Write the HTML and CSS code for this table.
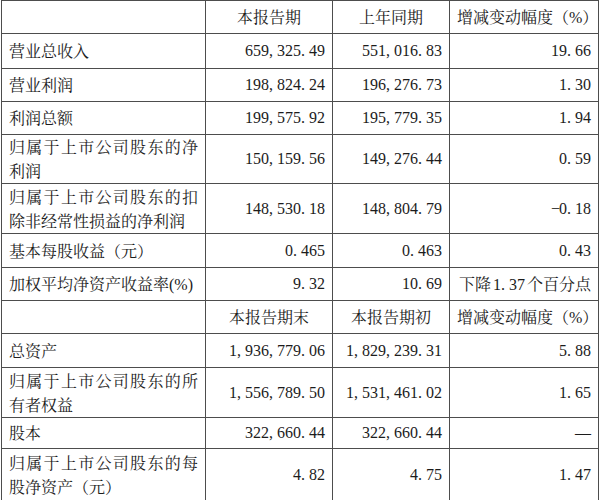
FILE: index.html
```html
<!DOCTYPE html>
<html lang="zh-CN">
<head>
<meta charset="utf-8">
<link rel="stylesheet" href="styles.css">
</head>
<body>
<table class="fin">
  <colgroup>
    <col class="c1"><col class="c2"><col class="c3"><col class="c4">
  </colgroup>
  <tbody>
    <tr class="h33">
      <td class="lbl"></td>
      <td class="hd">本报告期</td>
      <td class="hd">上年同期</td>
      <td class="hd">增减变动幅度（<span class="n">%</span>）</td>
    </tr>
    <tr class="h35">
      <td class="lbl">营业总收入</td>
      <td class="num">659<span class="s">,</span>325<span class="s">.</span>49</td>
      <td class="num">551<span class="s">,</span>016<span class="s">.</span>83</td>
      <td class="num">19<span class="s">.</span>66</td>
    </tr>
    <tr class="h33">
      <td class="lbl">营业利润</td>
      <td class="num">198<span class="s">,</span>824<span class="s">.</span>24</td>
      <td class="num">196<span class="s">,</span>276<span class="s">.</span>73</td>
      <td class="num">1<span class="s">.</span>30</td>
    </tr>
    <tr class="h33">
      <td class="lbl">利润总额</td>
      <td class="num">199<span class="s">,</span>575<span class="s">.</span>92</td>
      <td class="num">195<span class="s">,</span>779<span class="s">.</span>35</td>
      <td class="num">1<span class="s">.</span>94</td>
    </tr>
    <tr class="h49">
      <td class="lbl">归属于上市公司股东的净利润</td>
      <td class="num">150<span class="s">,</span>159<span class="s">.</span>56</td>
      <td class="num">149<span class="s">,</span>276<span class="s">.</span>44</td>
      <td class="num">0<span class="s">.</span>59</td>
    </tr>
    <tr class="h50">
      <td class="lbl">归属于上市公司股东的扣除非经常性损益的净利润</td>
      <td class="num">148<span class="s">,</span>530<span class="s">.</span>18</td>
      <td class="num">148<span class="s">,</span>804<span class="s">.</span>79</td>
      <td class="num"><span class="s">−</span>0<span class="s">.</span>18</td>
    </tr>
    <tr class="h34">
      <td class="lbl">基本每股收益（元）</td>
      <td class="num">0<span class="s">.</span>465</td>
      <td class="num">0<span class="s">.</span>463</td>
      <td class="num">0<span class="s">.</span>43</td>
    </tr>
    <tr class="h33">
      <td class="lbl">加权平均净资产收益率<span class="n">(%)</span></td>
      <td class="num">9<span class="s">.</span>32</td>
      <td class="num">10<span class="s">.</span>69</td>
      <td class="num txt">下降<span class="n pct">1<span class="s">.</span>37</span>个百分点</td>
    </tr>
    <tr class="h33">
      <td class="lbl"></td>
      <td class="hd">本报告期末</td>
      <td class="hd">本报告期初</td>
      <td class="hd">增减变动幅度（<span class="n">%</span>）</td>
    </tr>
    <tr class="h34">
      <td class="lbl">总资产</td>
      <td class="num">1<span class="s">,</span>936<span class="s">,</span>779<span class="s">.</span>06</td>
      <td class="num">1<span class="s">,</span>829<span class="s">,</span>239<span class="s">.</span>31</td>
      <td class="num">5<span class="s">.</span>88</td>
    </tr>
    <tr class="h50">
      <td class="lbl">归属于上市公司股东的所有者权益</td>
      <td class="num">1<span class="s">,</span>556<span class="s">,</span>789<span class="s">.</span>50</td>
      <td class="num">1<span class="s">,</span>531<span class="s">,</span>461<span class="s">.</span>02</td>
      <td class="num">1<span class="s">.</span>65</td>
    </tr>
    <tr class="h31">
      <td class="lbl">股本</td>
      <td class="num">322<span class="s">,</span>660<span class="s">.</span>44</td>
      <td class="num">322<span class="s">,</span>660<span class="s">.</span>44</td>
      <td class="num dash">—</td>
    </tr>
    <tr class="h52">
      <td class="lbl">归属于上市公司股东的每股净资产（元）</td>
      <td class="num">4<span class="s">.</span>82</td>
      <td class="num">4<span class="s">.</span>75</td>
      <td class="num">1<span class="s">.</span>47</td>
    </tr>
  </tbody>
</table>
</body>
</html>
```
FILE: styles.css
```css
html, body {
  margin: 0;
  padding: 0;
  background: #ffffff;
}
body {
  padding-left: 1px;
}
.fin {
  border-collapse: collapse;
  table-layout: fixed;
  width: 597px;
  font-family: "Noto Serif CJK SC", "Noto Sans CJK SC", serif;
  font-size: 16px;
  line-height: 24px;
  color: #1c1c1c;
}
.c1 { width: 204px; }
.c2 { width: 127px; }
.c3 { width: 117px; }
.c4 { width: 149px; }
.fin td {
  border: 1px solid #4d4d4d;
  padding: 0 7px 0 7px;
  vertical-align: middle;
  overflow: hidden;
}
.lbl {
  text-align: justify;
  padding-left: 7px;
}
.hd {
  text-align: center;
  white-space: nowrap;
}
.num {
  text-align: right;
  font-family: "Liberation Serif", "Noto Serif CJK SC", serif;
  white-space: nowrap;
}
.txt {
  font-family: "Noto Serif CJK SC", "Noto Sans CJK SC", serif;
  padding-left: 2px;
  padding-right: 6px;
}
.n {
  font-family: "Liberation Serif", serif;
}
.pct {
  margin: 0 2px;
}
.s {
  display: inline-block;
  width: 8px;
  text-align: left;
}
.dash {
  font-family: "Liberation Serif", serif;
  padding-right: 10px;
}
.h31 { height: 31px; }
.h33 { height: 33px; }
.h34 { height: 34px; }
.h35 { height: 35px; }
.h49 { height: 49px; }
.h50 { height: 50px; }
.h52 { height: 52px; }
```
